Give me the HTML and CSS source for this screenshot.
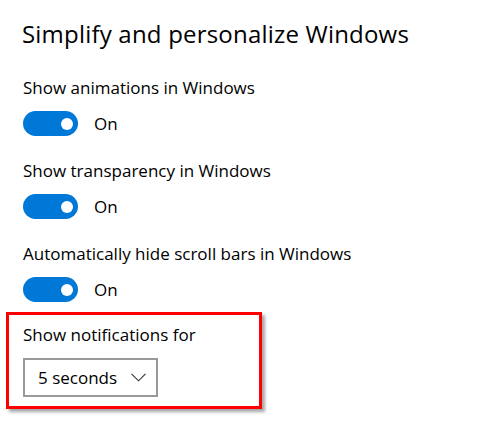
FILE: index.html
```html
<!DOCTYPE html>
<html>
<head>
<meta charset="utf-8">
<link rel="stylesheet" href="styles.css">
</head>
<body>
<div class="page">
  <h1 class="title">Simplify and personalize Windows</h1>
  <div class="setting">
    <div class="label">Show animations in Windows</div>
    <div class="toggle-row"><span class="toggle"><span class="knob"></span></span><span class="state">On</span></div>
  </div>
  <div class="setting">
    <div class="label">Show transparency in Windows</div>
    <div class="toggle-row"><span class="toggle"><span class="knob"></span></span><span class="state">On</span></div>
  </div>
  <div class="setting">
    <div class="label">Automatically hide scroll bars in Windows</div>
    <div class="toggle-row"><span class="toggle"><span class="knob"></span></span><span class="state">On</span></div>
  </div>
  <div class="highlight">
    <div class="label">Show notifications for</div>
    <div class="dropdown">
      <span class="dd-text">5 seconds</span>
      <svg class="chev" width="15" height="9" viewBox="0 0 15 9"><path d="M0.5 0.8 L7.5 7.8 L14.5 0.8" fill="none" stroke="#333" stroke-width="1.1"/></svg>
    </div>
  </div>
</div>
</body>
</html>
```
FILE: styles.css
```css
html, body { margin: 0; padding: 0; background: #fff; }
body { font-family: "Open Sans", "Noto Sans", sans-serif; color: #000; }
.page { padding: 18px 0 0 23px; width: 457px; height: 411px; box-sizing: content-box; }
.title { margin: 0 0 26px -1px; font-size: 24px; line-height: 32px; font-weight: 400; letter-spacing: 0.2px; }
.setting { margin-bottom: 23px; }
.label { font-size: 17px; line-height: 24px; }
.toggle-row { display: flex; align-items: center; gap: 16px; margin-top: 11px; height: 25px; }
.toggle { width: 55px; height: 25px; border-radius: 13px; background: #0078d7; display: flex; align-items: center; justify-content: flex-end; padding-right: 5px; box-sizing: border-box; }
.knob { width: 12px; height: 12px; border-radius: 50%; background: #fff; }
.state { font-size: 17px; line-height: 24px; }
.highlight { margin-left: -17px; width: 256px; height: 97px; box-sizing: border-box; border: 3px solid #f00; padding: 8px 0 0 14px; box-shadow: 3px 3px 3px rgba(0,0,0,0.35); margin-top: -13px; }
.dropdown { margin-top: 11px; width: 135px; height: 39px; box-sizing: border-box; border: 2px solid #999; display: flex; align-items: center; justify-content: space-between; padding: 0 10px 0 13px; }
.dd-text { font-size: 17px; line-height: 24px; }
.chev { display: block; }
```
